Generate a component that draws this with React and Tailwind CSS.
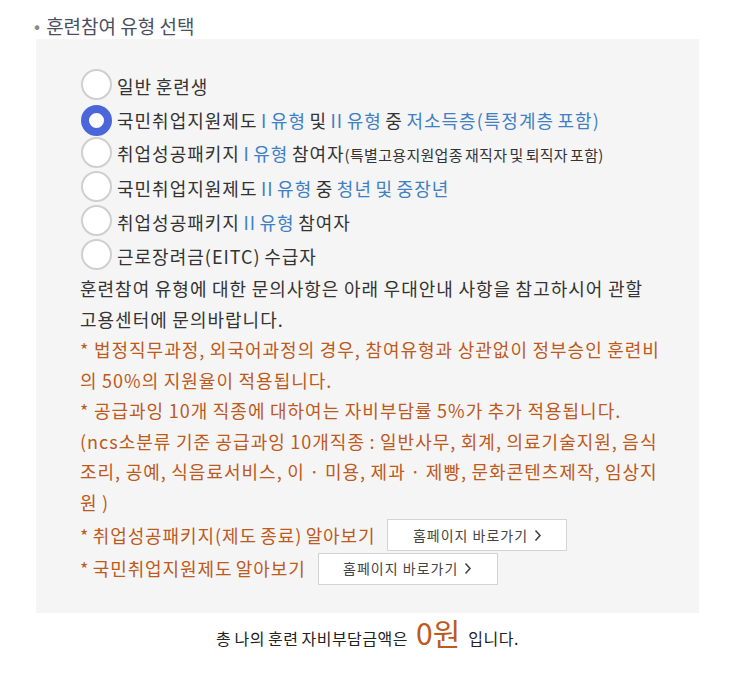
import { useState } from 'react'

const FONT = { fontFamily: '"Noto Sans CJK KR", "Noto Sans", sans-serif' }

const OPTIONS = [
  { id: 'general', label: <>일반 훈련생</> },
  {
    id: 'kua-low',
    label: (
      <>
        국민취업지원제도 <span className="text-[#3f80c4]">I 유형</span> 및{' '}
        <span className="text-[#3f80c4]">II 유형</span> 중{' '}
        <span className="text-[#3f80c4]">저소득층(특정계층 포함)</span>
      </>
    ),
  },
  {
    id: 'pkg-1',
    label: (
      <>
        취업성공패키지 <span className="text-[#3f80c4]">I 유형</span> 참여자
        <span className="text-[15px] tracking-[0.3px]">(특별고용지원업종 재직자 및 퇴직자 포함)</span>
      </>
    ),
  },
  {
    id: 'kua-2',
    label: (
      <>
        국민취업지원제도 <span className="text-[#3f80c4]">II 유형</span> 중{' '}
        <span className="text-[#3f80c4]">청년 및 중장년</span>
      </>
    ),
  },
  {
    id: 'pkg-2',
    label: (
      <>
        취업성공패키지 <span className="text-[#3f80c4]">II 유형</span> 참여자
      </>
    ),
  },
  { id: 'eitc', label: <>근로장려금(EITC) 수급자</> },
]

function Radio({ checked, onClick }) {
  return (
    <button
      type="button"
      onClick={onClick}
      className={
        checked
          ? 'h-[31px] w-[31px] shrink-0 rounded-full border-[8px] border-[#4a66d8] bg-white'
          : 'h-[31px] w-[31px] shrink-0 rounded-full border-[2px] border-[#cfcfcf] bg-white'
      }
    />
  )
}

function LinkButton() {
  return (
    <button
      type="button"
      className="ml-3 flex h-[32px] w-[180px] items-center justify-center gap-1.5 border border-[#d4d4d4] bg-white text-[14px] tracking-[1px] text-[#444] [word-spacing:0px]"
    >
      홈페이지 바로가기
      <svg width="8" height="13" viewBox="0 0 8 13" fill="none">
        <path d="M1.5 1.5 L6 6.5 L1.5 11.5" stroke="#444" strokeWidth="1.6" />
      </svg>
    </button>
  )
}

export default function App() {
  const [selected, setSelected] = useState('kua-low')

  return (
    <div className="min-h-[690px] bg-white pt-[12px] text-[#333]" style={FONT}>
      <h3 className="ml-[34px] flex items-center text-[19px] leading-[27px] text-[#4b5060]">
        <span className="mr-[6px] text-[18px] text-[#888]">•</span>
        훈련참여 유형 선택
      </h3>

      <div className="ml-[36px] w-[663px] bg-[#f5f5f5] pb-[28px] pl-[44px] pr-[20px] pt-[30px]">
        <ul className="[word-spacing:-1.5px]">
          {OPTIONS.map((opt) => (
            <li key={opt.id} className="flex h-[34px] items-center">
              <div className="ml-[1px]">
                <Radio checked={selected === opt.id} onClick={() => setSelected(opt.id)} />
              </div>
              <span className="ml-[5px] whitespace-nowrap text-[18px] leading-[34px] tracking-[1px]">{opt.label}</span>
            </li>
          ))}
        </ul>

        <div className="text-[18px] leading-[30.5px] tracking-[1px] [word-spacing:-0.5px]">
          <p>
            훈련참여 유형에 대한 문의사항은 아래 우대안내 사항을 참고하시어 관할
            <br />
            고용센터에 문의바랍니다.
          </p>
          <p className="text-[#bd5a1d]">
            * 법정직무과정, 외국어과정의 경우, 참여유형과 상관없이 정부승인 훈련비
            <br />의 50%의 지원율이 적용됩니다.
          </p>
          <p className="text-[#bd5a1d]">* 공급과잉 10개 직종에 대하여는 자비부담률 5%가 추가 적용됩니다.</p>
          <p className="text-[#bd5a1d]">
            (ncs소분류 기준 공급과잉 10개직종 : 일반사무, 회계, 의료기술지원, 음식
            <br />
            조리, 공예, 식음료서비스, 이 · 미용, 제과 · 제빵, 문화콘텐츠제작, 임상지
            <br />원 )
          </p>
          <div className="mt-[2px] flex h-[32px] items-center tracking-[0.9px] text-[#bd5a1d] [word-spacing:-1.5px]">
            * 취업성공패키지(제도 종료) 알아보기
            <LinkButton />
          </div>
          <div className="mt-[1px] flex h-[33px] items-center tracking-[0.9px] text-[#bd5a1d] [word-spacing:-1.5px]">
            * 국민취업지원제도 알아보기
            <LinkButton />
          </div>
        </div>
      </div>

      <p className="ml-[36px] mt-[1px] flex w-[663px] items-baseline justify-center text-[16px] tracking-[0.5px] text-[#222] [word-spacing:-1px]">
        총 나의 훈련 자비부담금액은
        <span className="mx-[8px] text-[30px] leading-[36px] tracking-normal text-[#bd5a1d]">0원</span>
        입니다.
      </p>
    </div>
  )
}
